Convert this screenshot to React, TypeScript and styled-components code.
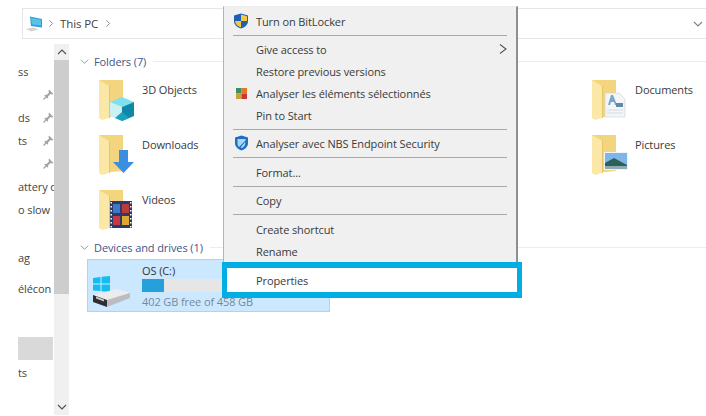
import React from "react";
import styled, { createGlobalStyle } from "styled-components";

const Global = createGlobalStyle`
  html, body { margin: 0; padding: 0; background: #fff; }
  body { font-family: "Open Sans", "Noto Sans", "Liberation Sans", sans-serif; }
`;

const Page = styled.div`
  position: relative;
  width: 706px;
  height: 416px;
  overflow: hidden;
  background: #fff;
  color: #3a3a3a;
  font-size: 11px;
  letter-spacing: -0.1px;
`;

const AddressBar = styled.div`
  display: flex;
  align-items: center;
  height: 29px;
  margin: 8px 0 0 22px;
  padding: 0 3px 0 3px;
  border: 1px solid #e6e6e6;
  border-right: 0;
  box-sizing: content-box;
`;

const CrumbArrow = styled.span`
  display: flex;
  margin: 0 4px 0 3px;
`;

const Crumb = styled.span`
  margin: 0 6px 0 1px;
  font-size: 11.5px;
  color: #444;
`;

const Spring = styled.div`
  flex: 1;
`;

const Body = styled.div`
  display: flex;
  margin-top: 5px;
  height: 371px;
`;

const Sidebar = styled.nav`
  width: 54px;
  flex: none;
  padding: 16px 0 0 18px;
  box-sizing: border-box;
  overflow: hidden;
  font-size: 11px;
`;

const NavRow = styled.div<{ $h?: number; $selected?: boolean }>`
  display: flex;
  align-items: center;
  justify-content: space-between;
  height: ${(p) => p.$h ?? 23}px;
  margin-right: ${(p) => (p.$selected ? 1 : 0)}px;
  background: ${(p) => (p.$selected ? "#d9d9d9" : "transparent")};
  white-space: nowrap;
  overflow: hidden;
  color: #444;
`;

const Scrollbar = styled.div`
  display: flex;
  flex-direction: column;
  width: 15px;
  flex: none;
  background: #f0f0f0;
`;

const ScrollArrow = styled.div`
  height: 16px;
  display: flex;
  align-items: center;
  justify-content: center;
  flex: none;
`;

const ScrollTrack = styled.div`
  flex: 1;
`;

const ScrollThumb = styled.div`
  height: 234px;
  background: #cdcdcd;
`;

const Content = styled.main`
  flex: 1;
  padding-top: 8px;
  min-width: 0;
`;

const SectionHead = styled.div`
  display: flex;
  align-items: center;
  gap: 5px;
  height: 18px;
  padding-left: 11px;
  color: #445588;
  font-size: 11px;
  &::after {
    content: "";
    flex: 1;
    height: 1px;
    background: #ececec;
    margin-left: 2px;
  }
`;

const FolderGrid = styled.div`
  display: grid;
  grid-template-columns: 493px 1fr;
  grid-auto-rows: 55px;
  padding: 9px 0 0 30px;
  height: 168px;
  box-sizing: border-box;
`;

const FolderItem = styled.div`
  display: flex;
  align-items: flex-start;
`;

const FolderLabel = styled.span`
  margin: 3px 0 0 -7px;
  font-size: 11px;
  color: #3a3a3a;
`;

const DriveTile = styled.div`
  display: flex;
  width: 243px;
  height: 53px;
  margin: 3px 0 0 18px;
  box-sizing: border-box;
  background: #cce8ff;
  border: 1px solid #a6d6fb;
  padding: 3px 0 0 5px;
`;

const DriveGlyph = styled.span`
  display: flex;
  flex: none;
  margin-top: 13px;
`;

const DriveInfo = styled.div`
  display: flex;
  flex-direction: column;
  margin-left: 11px;
`;

const DriveName = styled.span`
  font-size: 11px;
  line-height: 15px;
  height: 15px;
  color: #333;
`;

const Bar = styled.div`
  width: 181px;
  height: 13px;
  margin-top: 1px;
  background: #e6e6e6;
`;

const BarFill = styled.div`
  height: 100%;
  background: #26a0da;
`;

const DriveFree = styled.span`
  font-size: 11px;
  line-height: 15px;
  margin-top: 2px;
  color: #75889a;
`;

const Menu = styled.div`
  position: absolute;
  left: 223px;
  top: 6px;
  width: 295px;
  box-sizing: border-box;
  padding-top: 3px;
  background: #f0f0f0;
  border-left: 1px solid #b4b4b4;
  border-right: 2px solid #8f8f8f;
  border-top: 1px solid #ededed;
  color: #3a3a3a;
  font-size: 11px;
`;

const MenuRow = styled.div`
  position: relative;
  display: flex;
  align-items: center;
  height: 22px;
  padding-left: 32px;
`;

const MenuIcon = styled.span`
  position: absolute;
  left: 9px;
  top: 3px;
  display: flex;
  width: 16px;
  height: 16px;
  align-items: center;
  justify-content: center;
`;

const SubArrow = styled.span`
  position: absolute;
  right: 8px;
  top: 5px;
  display: flex;
`;

const MenuSep = styled.div<{ $h?: number }>`
  height: ${(p) => p.$h ?? 6}px;
  display: flex;
  align-items: center;
  padding: 0 9px;
  &::before {
    content: "";
    flex: 1;
    height: 1px;
    background: #a8a8a8;
  }
`;

const HighlightRow = styled.div`
  display: flex;
  align-items: center;
  height: 24px;
  margin: 0 -6px 0 -2px;
  padding-left: 29px;
  background: #fff;
  border: solid #00aee3;
  border-width: 6px 5px;
  color: #3a3a3a;
`;

const Chevron = ({ d, stroke = "#808080", w = 10, h = 10 }: { d: string; stroke?: string; w?: number; h?: number }) => (
  <svg width={w} height={h} viewBox="0 0 10 10" fill="none" stroke={stroke} strokeWidth="1.1">
    <polyline points={d} />
  </svg>
);

const PcIcon = () => (
  <svg width="18" height="16" viewBox="0 0 18 16">
    <polygon points="4,0.5 16,3 16,11.5 5,10" fill="#2f9fd8" />
    <polygon points="5,2 15,3.8 15,9.5 6,8.5" fill="#5cc0ea" />
    <polygon points="0,13 7,11.5 13,13.5 5,15.5" fill="#d4d4d4" />
  </svg>
);

const Pin = () => (
  <svg width="11" height="11" viewBox="0 0 11 11">
    <polygon points="6,0.5 10.5,5 9,5.5 7.5,5 5,7.5 5.2,9 4.2,9.6 1.4,6.8 2,5.8 3.5,6 6,3.5 5.5,2" fill="#a3a3a3" />
    <line x1="3" y1="8" x2="0.5" y2="10.5" stroke="#a3a3a3" strokeWidth="1.2" />
  </svg>
);

const Folder = ({ children }: { children?: React.ReactNode }) => (
  <svg width="50" height="44" viewBox="0 0 50 44" style={{ flex: "none" }}>
    <polygon points="0,1 24,1 24,37 0,39" fill="#f3d57f" />
    <polygon points="0,1 10,7 10,39 3,41 0,39" fill="#fbe7a6" />
    <polygon points="10,7 11,7 11,39 10,39" fill="#e8c56c" />
    {children}
  </svg>
);

const Cube = () => (
  <g>
    <polygon points="23,18 35,23 23,28 11,23" fill="#7fe0ee" />
    <polygon points="11,23 23,28 23,42 11,37" fill="#c9f1f6" />
    <polygon points="23,28 35,23 35,37 23,42" fill="#0f87a8" />
    <polygon points="23,42 16,39 23,33 30,39" fill="#1aa2bd" />
  </g>
);

const Arrow = () => (
  <polygon points="20,16 29,16 29,28 35,28 24.5,39 14,28 20,28" fill="#3a8fe3" />
);

const Film = () => (
  <g>
    <rect x="11" y="12" width="22" height="27" fill="#2b3a6b" />
    <rect x="14" y="15" width="7" height="9" fill="#3f78c9" />
    <rect x="23" y="15" width="7" height="9" fill="#b93b3b" />
    <rect x="14" y="27" width="7" height="9" fill="#c8393f" />
    <rect x="23" y="27" width="7" height="9" fill="#e0a82e" />
    {[13, 17, 21, 25, 29, 33, 37].map((y) => (
      <g key={y}>
        <rect x="11.5" y={y} width="1.5" height="1.5" fill="#fff" />
        <rect x="31" y={y} width="1.5" height="1.5" fill="#fff" />
      </g>
    ))}
  </g>
);

const Doc = () => (
  <g>
    <polygon points="13,14 27,14 33,20 33,38 13,38" fill="#f4f5f6" stroke="#cfd4d9" strokeWidth="0.7" />
    <polygon points="19,16 21,16 25,26 23,26 22,23 19,23 18,26 16,26" fill="#7aa6cc" />
    <rect x="24" y="24" width="7" height="4" fill="#5f8aa5" />
    <line x1="15" y1="31" x2="31" y2="31" stroke="#d8dce0" />
    <line x1="15" y1="34" x2="31" y2="34" stroke="#d8dce0" />
  </g>
);

const Picture = () => (
  <g>
    <rect x="12" y="18" width="24" height="18" fill="#eef4f8" />
    <rect x="13" y="19" width="22" height="16" fill="#7eb6e8" />
    <polygon points="13,29 22,24 35,31 35,35 13,35" fill="#2f6058" />
    <polygon points="13,32 35,32 35,35 13,35" fill="#8fa9b5" />
  </g>
);

const DriveIcon = () => (
  <svg width="38" height="32" viewBox="0 0 38 32">
    <g fill="#14bdf0">
      <polygon points="0,2 7.5,1 7.5,7.5 0,7.5" />
      <polygon points="8.5,0.8 17,0 17,7.5 8.5,7.5" />
      <polygon points="0,8.5 7.5,8.5 7.5,15 0,14.5" />
      <polygon points="8.5,8.5 17,8.5 17,16 8.5,15.2" />
    </g>
    <polygon points="0,19 24,13 37,17 14,24" fill="#ececef" />
    <polygon points="0,19 14,24 14,31 0,26" fill="#2f2f33" />
    <polygon points="14,24 37,17 37,22 14,31" fill="#bcbcc2" />
    <polygon points="3,20.5 11,23.5 11,25.5 3,22.5" fill="#c9c9c9" />
  </svg>
);

const UacShield = () => (
  <svg width="16" height="16" viewBox="0 0 16 16">
    <path d="M8 0.5 L15 2.5 V8 C15 12 11.5 14.5 8 15.5 C4.5 14.5 1 12 1 8 V2.5 Z" fill="#1f5fb4" />
    <path d="M8 1.5 V8 H14 V3.2 Z" fill="#f6c744" />
    <path d="M8 8 V14.5 C5 13.6 2.4 11.6 2 8 Z" fill="#f6c744" />
  </svg>
);

const AvgIcon = () => (
  <svg width="11" height="11" viewBox="0 0 12 12">
    <rect x="0" y="0" width="6" height="6" fill="#3c8f62" />
    <rect x="6" y="0" width="6" height="6" fill="#e0782a" />
    <rect x="0" y="6" width="6" height="6" fill="#c9a23a" />
    <rect x="6" y="6" width="6" height="6" fill="#c8383a" />
  </svg>
);

const NbsShield = () => (
  <svg width="15" height="16" viewBox="0 0 15 16">
    <path d="M7.5 0.5 L14 2.5 V8 C14 12 10.5 14.5 7.5 15.5 C4.5 14.5 1 12 1 8 V2.5 Z" fill="#1d6fc2" />
    <path d="M3.5 4 L11.5 4 L11.5 5.5 L5 12 C4 11 3.5 10 3.5 8 Z" fill="#a8d6f5" />
    <path d="M11 7 L6.5 12.5 L8 13 C10 12 11.3 10 11.3 8 Z" fill="#a8d6f5" />
  </svg>
);

const folders = [
  { name: "3D Objects", art: <Cube /> },
  { name: "Documents", art: <Doc /> },
  { name: "Downloads", art: <Arrow /> },
  { name: "Pictures", art: <Picture /> },
  { name: "Videos", art: <Film /> },
];

const nav = [
  { t: "ss" },
  { t: "", pin: true },
  { t: "ds", pin: true },
  { t: "ts", pin: true },
  { t: "", pin: true },
  { t: "attery d" },
  { t: "o slow" },
  { t: "" },
  { t: "ag", h: 27 },
  { t: "élécon", h: 34 },
  { t: "", h: 32 },
  { t: "", selected: true },
  { t: "", h: 1 },
  { t: "ts" },
];

const down = "1,3 5,7 9,3";

export default function App() {
  return (
    <Page>
      <Global />
      <AddressBar>
        <PcIcon />
        <CrumbArrow>
          <Chevron d="3,1 7,5 3,9" w={8} h={9} />
        </CrumbArrow>
        <Crumb>This PC</Crumb>
        <Chevron d="3,1 7,5 3,9" w={8} h={9} />
        <Spring />
        <Chevron d={down} />
      </AddressBar>
      <Body>
        <Sidebar>
          {nav.map((n, i) => (
            <NavRow key={i} $h={n.h} $selected={n.selected}>
              <span>{n.t}</span>
              {n.pin && <Pin />}
            </NavRow>
          ))}
        </Sidebar>
        <Scrollbar>
          <ScrollArrow>
            <Chevron d="1,7 5,3 9,7" stroke="#505050" />
          </ScrollArrow>
          <ScrollThumb />
          <ScrollTrack />
          <ScrollArrow>
            <Chevron d={down} stroke="#505050" />
          </ScrollArrow>
        </Scrollbar>
        <Content>
          <SectionHead>
            <Chevron d={down} stroke="#9a9a9a" w={9} h={9} />
            Folders (7)
          </SectionHead>
          <FolderGrid>
            {folders.map((f) => (
              <FolderItem key={f.name}>
                <Folder>{f.art}</Folder>
                <FolderLabel>{f.name}</FolderLabel>
              </FolderItem>
            ))}
          </FolderGrid>
          <SectionHead>
            <Chevron d={down} stroke="#9a9a9a" w={9} h={9} />
            Devices and drives (1)
          </SectionHead>
          <DriveTile>
            <DriveGlyph><DriveIcon /></DriveGlyph>
            <DriveInfo>
              <DriveName>OS (C:)</DriveName>
              <Bar>
                <BarFill style={{ width: `${(1 - 402 / 458) * 100}%` }} />
              </Bar>
              <DriveFree>402 GB free of 458 GB</DriveFree>
            </DriveInfo>
          </DriveTile>
        </Content>
      </Body>
      <Menu>
        <MenuRow>
          <MenuIcon><UacShield /></MenuIcon>
          Turn on BitLocker
        </MenuRow>
        <MenuSep />
        <MenuRow>
          Give access to
          <SubArrow><Chevron d="2,0.5 8,5 2,9.5" stroke="#555" w={10} h={12} /></SubArrow>
        </MenuRow>
        <MenuRow>Restore previous versions</MenuRow>
        <MenuRow>
          <MenuIcon><AvgIcon /></MenuIcon>
          Analyser les éléments sélectionnés
        </MenuRow>
        <MenuRow>Pin to Start</MenuRow>
        <MenuSep />
        <MenuRow>
          <MenuIcon><NbsShield /></MenuIcon>
          Analyser avec NBS Endpoint Security
        </MenuRow>
        <MenuSep $h={7} />
        <MenuRow>Format...</MenuRow>
        <MenuSep />
        <MenuRow>Copy</MenuRow>
        <MenuSep $h={7} />
        <MenuRow>Create shortcut</MenuRow>
        <MenuRow>Rename</MenuRow>
        <HighlightRow>Properties</HighlightRow>
      </Menu>
    </Page>
  );
}
